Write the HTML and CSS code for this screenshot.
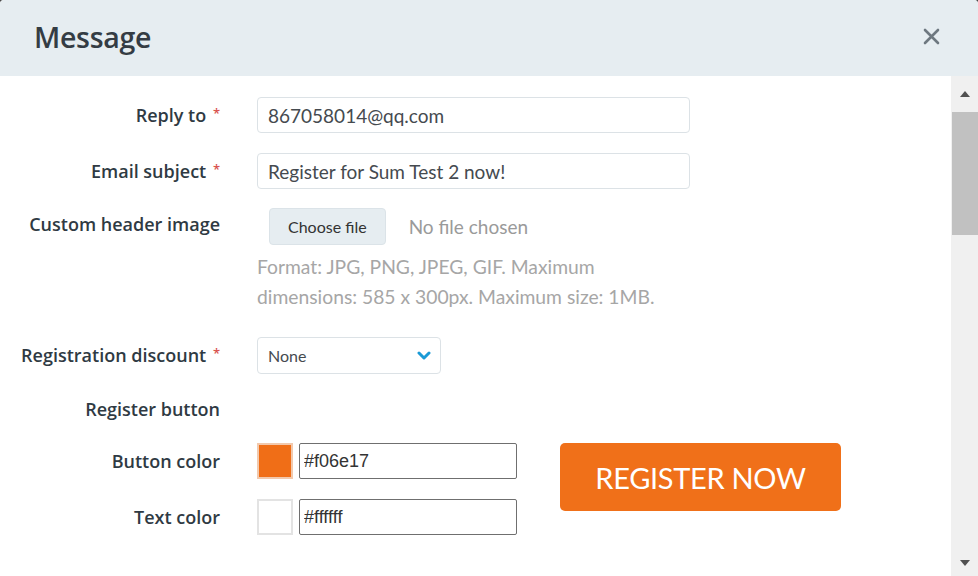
FILE: index.html
```html
<!DOCTYPE html>
<html lang="en">
<head>
  <meta charset="UTF-8" />
  <title>Message</title>
  <link rel="stylesheet" href="styles.css">
</head>
<body>
  <div class="modal">
    <div class="modal-header">
      <h2>Message</h2>
      <span class="close">
        <svg width="17" height="17" viewBox="0 0 17 17"><path d="M2 2 L15 15 M15 2 L2 15" stroke="#6e7880" stroke-width="2.6" stroke-linecap="round"/></svg>
      </span>
    </div>
    <div class="modal-body">
      <div class="content">
        <div class="row">
          <div class="label">Reply to <span class="req">*</span></div>
          <div class="field"><input class="text-input" type="text" value="867058014@qq.com"></div>
        </div>
        <div class="row">
          <div class="label">Email subject <span class="req">*</span></div>
          <div class="field"><input class="text-input" type="text" value="Register for Sum Test 2 now!"></div>
        </div>
        <div class="row row-file">
          <div class="label">Custom header image</div>
          <div class="field">
            <div class="file-pick">
              <span class="file-btn">Choose file</span>
              <span class="file-none">No file chosen</span>
            </div>
            <p class="help">Format: JPG, PNG, JPEG, GIF. Maximum<br>dimensions: 585 x 300px. Maximum size: 1MB.</p>
          </div>
        </div>
        <div class="row row-select">
          <div class="label">Registration discount <span class="req">*</span></div>
          <div class="field">
            <div class="select">
              <span>None</span>
              <svg width="14" height="10" viewBox="0 0 14 10"><path d="M2 2 L7 7 L12 2" fill="none" stroke="#1a9ad6" stroke-width="3" stroke-linecap="round" stroke-linejoin="round"/></svg>
            </div>
          </div>
        </div>
        <div class="row row-sub">
          <div class="label">Register button</div>
        </div>
        <div class="color-block">
          <div class="color-rows">
            <div class="row color-row">
              <div class="label">Button color</div>
              <div class="field color-field">
                <span class="swatch swatch-orange"></span>
                <input class="color-input" type="text" value="#f06e17">
              </div>
            </div>
            <div class="row color-row">
              <div class="label">Text color</div>
              <div class="field color-field">
                <span class="swatch"></span>
                <input class="color-input" type="text" value="#ffffff">
              </div>
            </div>
          </div>
          <div class="preview">REGISTER NOW</div>
        </div>
      </div>
      <div class="scrollbar">
        <div class="sb-arrow">
          <svg width="12" height="8" viewBox="0 0 12 8"><path d="M6 1 L11 7 L1 7 Z" fill="#505050"/></svg>
        </div>
        <div class="sb-thumb"></div>
        <div class="sb-space"></div>
        <div class="sb-arrow sb-down">
          <svg width="12" height="8" viewBox="0 0 12 8"><path d="M1 1 L11 1 L6 7 Z" fill="#505050"/></svg>
        </div>
      </div>
    </div>
  </div>
</body>
</html>
```

FILE: styles.css
```css
html, body {
  margin: 0;
  height: 100%;
  overflow: hidden;
}

body {
  background: #4a4a4a;
  font-family: "Lato", "Open Sans", sans-serif;
  color: #2f3a43;
}

.modal {
  width: 978px;
  height: 576px;
  background: #fff;
  border-radius: 4px 4px 0 0;
  display: flex;
  flex-direction: column;
  overflow: hidden;
}

.modal-header {
  height: 76px;
  flex-shrink: 0;
  background: #e6edf1;
  display: flex;
  align-items: center;
  justify-content: space-between;
  padding: 0 38px 0 34px;
}

.modal-header h2 {
  margin: 0 0 3px;
  font-family: "Open Sans", sans-serif;
  font-size: 28.5px;
  font-weight: 600;
  color: #343c44;
  letter-spacing: -0.3px;
}

.close {
  display: flex;
  margin-top: -4px;
}

.modal-body {
  flex: 1;
  display: flex;
  min-height: 0;
}

.content {
  flex: 1;
  padding-top: 21px;
}

.row {
  display: flex;
  align-items: flex-start;
}

.label {
  width: 220px;
  flex-shrink: 0;
  text-align: right;
  font-family: "Open Sans", sans-serif;
  font-size: 18px;
  font-weight: 600;
  line-height: 32px;
  color: #2f3a43;
}

.req {
  color: #d9534f;
  font-size: 13px;
  vertical-align: 4px;
  margin-left: 2px;
}

.field {
  margin-left: 37px;
}

.text-input {
  box-sizing: border-box;
  width: 433px;
  height: 36px;
  border: 1px solid #dce2e6;
  border-radius: 4px;
  padding: 0 10px;
  font-family: "Lato", "Open Sans", sans-serif;
  font-size: 19px;
  color: #454a4f;
  margin-bottom: 20px;
}

.row + .row .text-input {
  margin-bottom: 19px;
}

.file-pick {
  display: flex;
  align-items: center;
  padding-left: 12px;
}

.file-btn {
  box-sizing: border-box;
  height: 37px;
  line-height: 35px;
  padding: 0 18px;
  background: #e6edf1;
  border: 1px solid #dbe3e8;
  border-radius: 4px;
  font-size: 16px;
  color: #333;
}

.file-none {
  margin-left: 23px;
  font-size: 19px;
  color: #9a9a9a;
}

.help {
  margin: 7px 0 25px;
  font-size: 19.3px;
  line-height: 30px;
  color: #a6a6a6;
}

.select {
  box-sizing: border-box;
  width: 184px;
  height: 37px;
  border: 1px solid #dce2e6;
  border-radius: 4px;
  display: flex;
  align-items: center;
  justify-content: space-between;
  padding: 0 9px 0 10px;
  font-size: 16px;
  color: #454a4f;
  margin-bottom: 18px;
}

.row-sub {
  margin-bottom: 17px;
}

.row-sub .label {
  line-height: 34px;
}

.color-block {
  display: flex;
  align-items: flex-start;
}

.color-rows {
  display: flex;
  flex-direction: column;
  gap: 20px;
}

.color-row .label {
  line-height: 36px;
}

.color-field {
  display: flex;
  gap: 6px;
}

.swatch {
  box-sizing: border-box;
  width: 36px;
  height: 36px;
  border: 2px solid #e3e3e3;
  background: #fff;
}

.swatch-orange {
  background: #f06e17;
  border-color: #f2c9ad;
}

.color-input {
  box-sizing: border-box;
  width: 218px;
  height: 36px;
  border: 1px solid #6f6f6f;
  border-radius: 2px;
  padding: 0 4px;
  font-family: "Liberation Sans", sans-serif;
  font-size: 18px;
  color: #333;
}

.preview {
  margin-left: 43px;
  width: 281px;
  height: 68px;
  background: #f07019;
  border-radius: 5px;
  color: #fff;
  font-size: 29px;
  display: flex;
  align-items: center;
  justify-content: center;
  letter-spacing: -0.3px;
}

.scrollbar {
  width: 27px;
  flex-shrink: 0;
  background: #f0f0f0;
  display: flex;
  flex-direction: column;
}

.sb-arrow {
  height: 36px;
  display: flex;
  align-items: center;
  justify-content: center;
}

.sb-down {
  height: 26px;
}

.sb-thumb {
  height: 123px;
  margin-left: 1px;
  background: #c1c1c1;
}

.sb-space {
  flex: 1;
}
```
